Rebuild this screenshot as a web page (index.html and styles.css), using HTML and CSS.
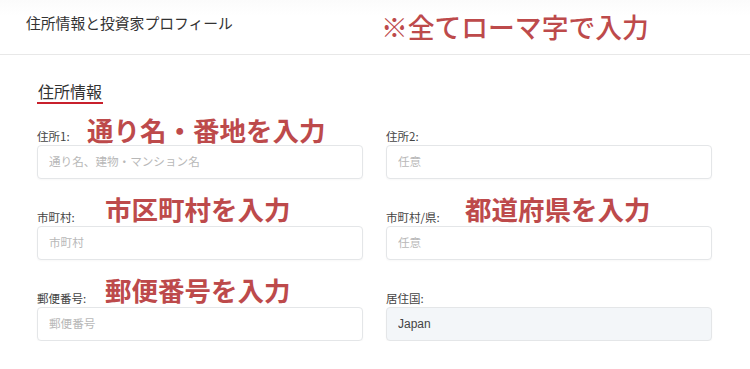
FILE: index.html
```html
<!DOCTYPE html>
<html lang="ja">
<head>
<meta charset="utf-8">
<title>住所情報と投資家プロフィール</title>
<link rel="stylesheet" href="styles.css">
</head>
<body>
<header class="header">
  <h1 class="header-title">住所情報と投資家プロフィール</h1>
  <span class="note note-header">※全てローマ字で入力</span>
</header>
<main class="content">
  <h2 class="section-title">住所情報</h2>
  <div class="form-grid">
    <div class="field">
      <div class="label-row"><label class="label">住所1:</label><span class="note note-a">通り名・番地を入力</span></div>
      <input class="input" type="text" placeholder="通り名、建物・マンション名">
    </div>
    <div class="field">
      <div class="label-row"><label class="label">住所2:</label></div>
      <input class="input" type="text" placeholder="任意">
    </div>
    <div class="field">
      <div class="label-row"><label class="label">市町村:</label><span class="note note-b">市区町村を入力</span></div>
      <input class="input" type="text" placeholder="市町村">
    </div>
    <div class="field">
      <div class="label-row"><label class="label">市町村/県:</label><span class="note note-c">都道府県を入力</span></div>
      <input class="input" type="text" placeholder="任意">
    </div>
    <div class="field">
      <div class="label-row"><label class="label">郵便番号:</label><span class="note note-b">郵便番号を入力</span></div>
      <input class="input" type="text" placeholder="郵便番号">
    </div>
    <div class="field">
      <div class="label-row"><label class="label">居住国:</label></div>
      <input class="input input-filled" type="text" value="Japan" readonly>
    </div>
  </div>
</main>
</body>
</html>
```
FILE: styles.css
```css
* { box-sizing: border-box; }
body {
  margin: 0;
  background: #fff;
  font-family: "Noto Sans CJK JP", "Noto Sans", sans-serif;
  color: #333;
}
.header {
  height: 55px;
  border-bottom: 1px solid #e8e8e8;
  display: flex;
  align-items: center;
  padding-left: 26px;
  background: linear-gradient(#fbfbfb, #fff 30%);
}
.header-title {
  margin: 0 0 9px 0;
  font-size: 14.8px;
  font-weight: 400;
  color: #333;
  line-height: 20px;
}
.note {
  color: #bd4a4b;
  font-weight: 700;
  font-size: 26.5px;
  line-height: 30px;
  white-space: nowrap;
}
.note-header {
  margin-left: 148px;
  font-size: 26.8px;
  font-weight: 500;
}
.content {
  padding: 0 38px 0 37px;
}
.section-title {
  display: inline-block;
  margin: 25px 0 0 0;
  font-size: 16px;
  font-weight: 400;
  line-height: 22px;
  color: #333;
  border-bottom: 2px solid #c8202c;
  padding: 0 1px 0 1px;
}
.form-grid {
  margin-top: 18px;
  display: grid;
  grid-template-columns: 1fr 1fr;
  column-gap: 23px;
  row-gap: 24px;
}
.label-row {
  position: relative;
  height: 16px;
  margin-bottom: 7px;
}
.label {
  font-size: 11.5px;
  line-height: 16px;
  color: #444;
}
.label-row .note {
  position: absolute;
  top: 50%;
  transform: translateY(-50%);
}
.note-a { left: 50px; }
.note-b { left: 68px; margin-top: -2px; }
.note-c { left: 79px; margin-top: -2px; }
.input {
  display: block;
  width: 100%;
  height: 34px;
  border: 1px solid #e4e6e8;
  border-radius: 4px;
  padding: 0 11px;
  font-family: "Liberation Sans", "Noto Sans CJK JP", sans-serif;
  font-size: 12px;
  color: #444;
  background: #fff;
  box-shadow: 0 1px 2px rgba(0,0,0,0.03);
  outline: none;
}
.input::placeholder {
  color: #b8b8b8;
  font-family: "Noto Sans CJK JP", sans-serif;
  font-size: 11.6px;
}
.input-filled {
  background: #f3f6f9;
}
```
